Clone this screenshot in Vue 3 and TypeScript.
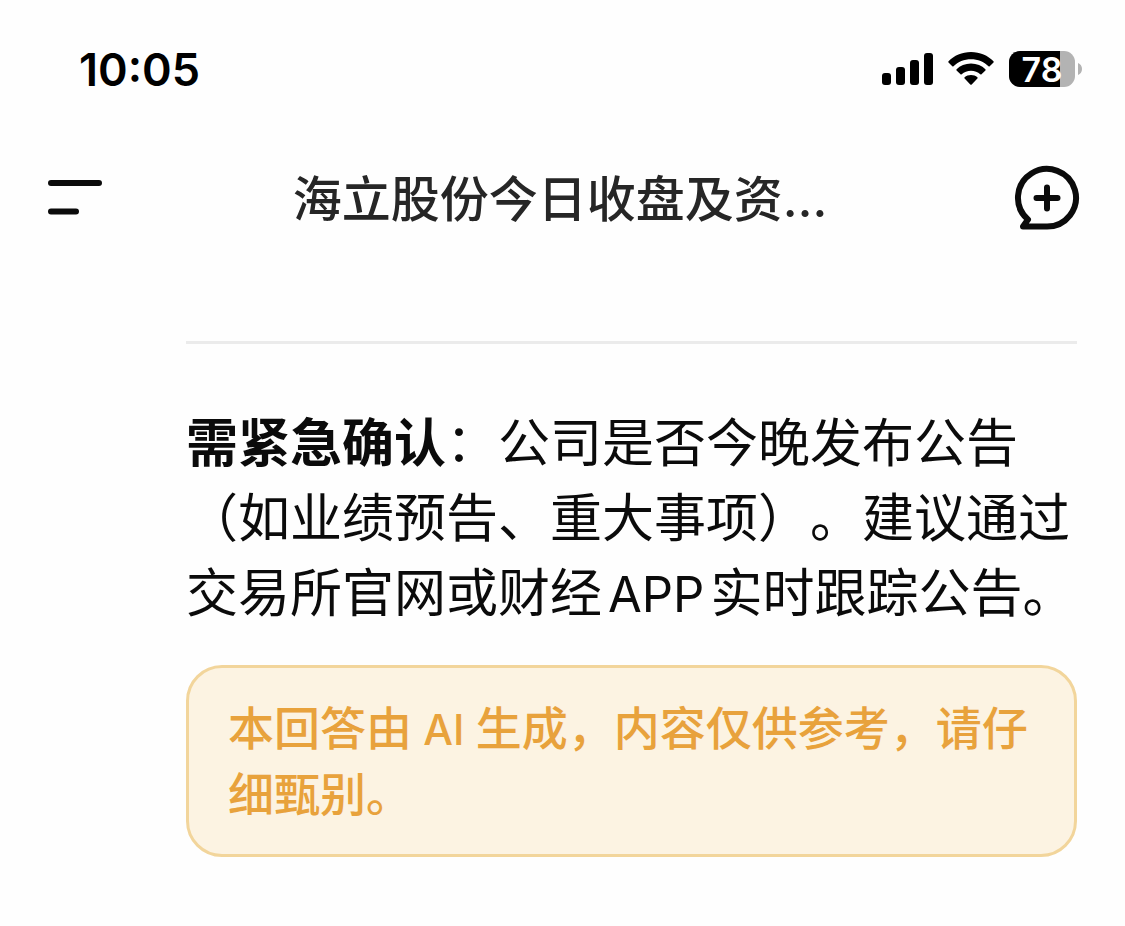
<script setup lang="ts">
import { ref } from 'vue'

const time = ref<string>('10:05')
const battery = ref<number>(78)
const title = ref<string>('海立股份今日收盘及资…')
</script>

<template>
  <div class="screen" lang="zh-CN">
    <div class="status">
      <time class="clock">{{ time }}</time>
      <div class="indicators">
        <svg class="signal" width="51" height="34" viewBox="0 0 51 34" aria-hidden="true">
          <rect x="0" y="21" width="9" height="12" rx="3" />
          <rect x="14" y="15" width="9" height="18" rx="3" />
          <rect x="28" y="8" width="9" height="25" rx="3" />
          <rect x="42" y="1" width="9" height="32" rx="3" />
        </svg>
        <svg class="wifi" width="46" height="34" viewBox="0 0 46 34" aria-hidden="true">
          <path d="M23 0C14 0 6 3.600 0.500 9.200Q0 9.900 0.500 10.500L4.300 14.200Q4.900 14.700 5.500 14.200C10 9.700 16.200 7.200 23 7.200S36 9.700 40.500 14.200Q41.100 14.700 41.700 14.200L45.500 10.500Q46 9.900 45.500 9.200C40 3.600 32 0 23 0Z" />
          <path d="M23 11.500C17.200 11.500 12.200 13.700 8.600 17.200Q8 17.900 8.600 18.500L12.500 22.200Q13.100 22.700 13.700 22.200C16.200 20 19.400 18.700 23 18.700S29.800 20 32.300 22.200Q32.900 22.700 33.500 22.200L37.400 18.500Q38 17.900 37.400 17.200C33.800 13.700 28.800 11.500 23 11.500Z" />
          <path d="M23 23C20.500 23 18.300 23.800 16.600 25.200Q16 25.900 16.600 26.500L22.300 32.400Q23 33.100 23.700 32.400L29.400 26.500Q30 25.900 29.400 25.200C27.700 23.800 25.500 23 23 23Z" />
        </svg>
        <div class="battery">
          <div class="cell">
            <span class="level" :style="{ width: battery + '%' }"></span>
            <span class="percent">{{ battery }}</span>
          </div>
          <svg width="4" height="12" viewBox="0 0 4 12" aria-hidden="true">
            <path d="M0 0C2.500 1 4 3.200 4 6S2.500 11 0 12Z" />
          </svg>
        </div>
      </div>
    </div>

    <header class="bar">
      <button class="icon" type="button" aria-label="菜单">
        <svg width="54" height="36" viewBox="0 0 54 36">
          <path d="M3 3H51M3 31.500H28" fill="none" stroke="#0b0b0b" stroke-width="6" stroke-linecap="round" />
        </svg>
      </button>
      <h1 class="title">{{ title }}</h1>
      <button class="icon" type="button" aria-label="新对话">
        <svg width="66" height="66" viewBox="0 0 66 66" fill="none" stroke="#0b0b0b" stroke-width="6" stroke-linecap="round" stroke-linejoin="round">
          <path d="M14 54.500A29 28.750 0 1 1 32.500 61.500H9Z" />
          <path d="M33 22.500V43.500M22.500 33H43.500" />
        </svg>
      </button>
    </header>

    <main class="answer">
      <hr class="rule" />
      <p class="text"><strong>需紧急确认</strong>：公司是否今晚发布公告（如业绩预告、重大事项）。建议通过交易所官网或财经<span class="latin">APP</span>实时跟踪公告。</p>
      <p class="notice">本回答由<span class="term"> AI </span>生成，内容仅供参考，请仔细甄别。</p>
    </main>
  </div>
</template>

<style>
body {
  margin: 0;
  background: #fefefe;
}
</style>

<style scoped>
.screen {
  font-family: Inter, "Noto Sans CJK SC", sans-serif;
  color: #0b0b0b;
  text-spacing-trim: space-all;
}
.status {
  display: flex;
  align-items: center;
  justify-content: space-between;
  height: 138px;
  padding: 0 43px 0 79px;
}
.clock {
  padding-top: 2px;
  font-size: 45px;
  line-height: 54px;
  font-weight: 600;
  color: #000;
}
.indicators {
  display: flex;
  align-items: center;
  gap: 15px;
}
.battery {
  display: flex;
  align-items: center;
  gap: 3px;
}
.battery svg {
  fill: #b3b3b3;
}
.cell {
  position: relative;
  width: 66px;
  height: 36px;
  border-radius: 11px;
  background: #b3b3b3;
}
.level {
  position: absolute;
  inset: 0 auto 0 0;
  border-radius: 11px 0 0 11px;
  background: #000;
}
.percent {
  position: relative;
  display: block;
  text-align: center;
  font-size: 34px;
  line-height: 38px;
  font-weight: 600;
  color: #fff;
}
.bar {
  display: flex;
  align-items: center;
  justify-content: space-between;
  height: 120px;
  padding: 0 45px 0 48px;
}
.icon {
  display: flex;
  padding: 0;
  border: 0;
  background: none;
}
.title {
  margin: 0;
  padding: 4px 0 0 4px;
  font-size: 49px;
  line-height: 64px;
  font-weight: 500;
  color: #262626;
}
.answer {
  padding: 83px 48px 68px 186px;
}
.rule {
  height: 3px;
  margin: 0 0 62px;
  border: 0;
  background: #ebebeb;
}
.text {
  margin: 0;
  font-size: 52px;
  line-height: 75px;
}
.text strong {
  font-weight: 700;
}
.latin {
  margin: 0 6px;
  font-size: 49px;
  line-height: 1;
}
.term {
  font-size: 42px;
  line-height: 1;
}
.notice {
  margin: 34px 0 0;
  padding: 27px 39px;
  border: 3px solid #f2d59b;
  border-radius: 36px;
  background: #fcf3e2;
  color: #e8a23c;
  font-size: 46px;
  line-height: 66px;
  font-weight: 500;
}
</style>
